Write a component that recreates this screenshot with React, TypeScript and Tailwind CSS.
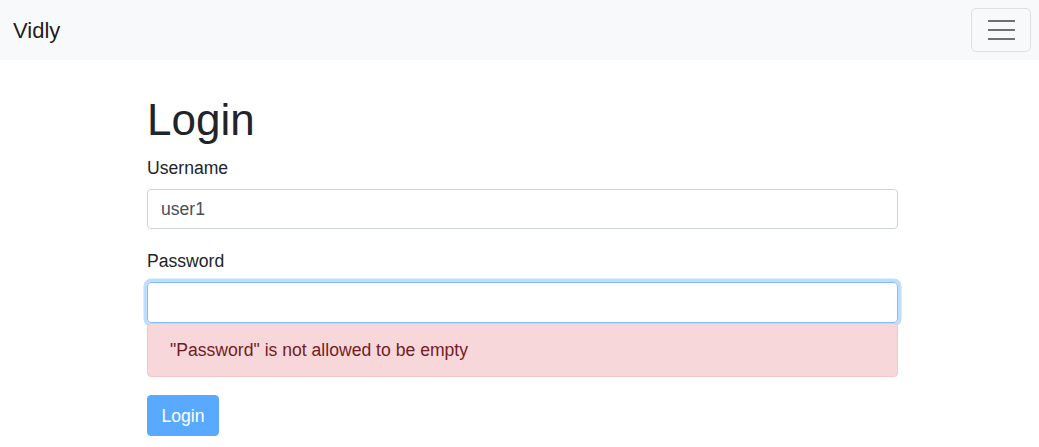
import React from "react";

export default function App() {
  return (
    <div
      className="min-h-[447px] bg-white text-[#212529]"
      style={{ fontFamily: '"Liberation Sans", Arial, sans-serif' }}
    >
      <nav className="flex h-[60px] items-center justify-between bg-[#f8f9fa] pl-[13px] pr-[8px]">
        <span className="pt-[1px] text-[22px] leading-none text-[rgba(0,0,0,0.9)]">Vidly</span>
        <button className="flex h-[44px] w-[60px] flex-col items-center justify-center gap-[6.7px] rounded-[5px] border border-[rgba(0,0,0,0.1)]">
          <span className="block h-[2px] w-[27px] bg-[#707070]" />
          <span className="block h-[2px] w-[27px] bg-[#707070]" />
          <span className="block h-[2px] w-[27px] bg-[#707070]" />
        </button>
      </nav>
      <main className="ml-[147px] w-[751px] pt-[33px]">
        <h1 className="mb-[6px] h-[53px] text-[44px] leading-[53px] font-medium">Login</h1>
        <form>
          <div className="mb-[16px]">
            <label className="mb-[8px] block h-[29px] pt-[3px] text-[17.6px] leading-[26px]">Username</label>
            <input
              readOnly
              value="user1"
              className="block h-[40px] w-full rounded-[4px] border border-[#ced4da] px-[13px] pt-[1px] text-[17.6px] text-[#495057] outline-none"
            />
          </div>
          <div className="mb-[18px]">
            <label className="mb-[8px] block h-[29px] pt-[3px] text-[17.6px] leading-[26px]">Password</label>
            <input
              type="password"
              readOnly
              className="block h-[41px] w-full rounded-[4px] border border-[#80bdff] px-[13px] text-[17.6px] text-[#495057] shadow-[0_0_0_3.5px_rgba(0,123,255,0.25)] outline-none"
            />
            <div className="flex h-[54px] items-center rounded-[4px] border border-[#f5c6cb] bg-[#f8d7da] px-[22px] text-[17.6px] text-[#721c24]">
              "Password" is not allowed to be empty
            </div>
          </div>
          <button
            type="button"
            className="h-[41px] w-[72px] rounded-[4px] border border-[#59a9ff] bg-[#59a9ff] pt-[1px] text-[17.6px] text-white"
          >
            Login
          </button>
        </form>
      </main>
    </div>
  );
}
